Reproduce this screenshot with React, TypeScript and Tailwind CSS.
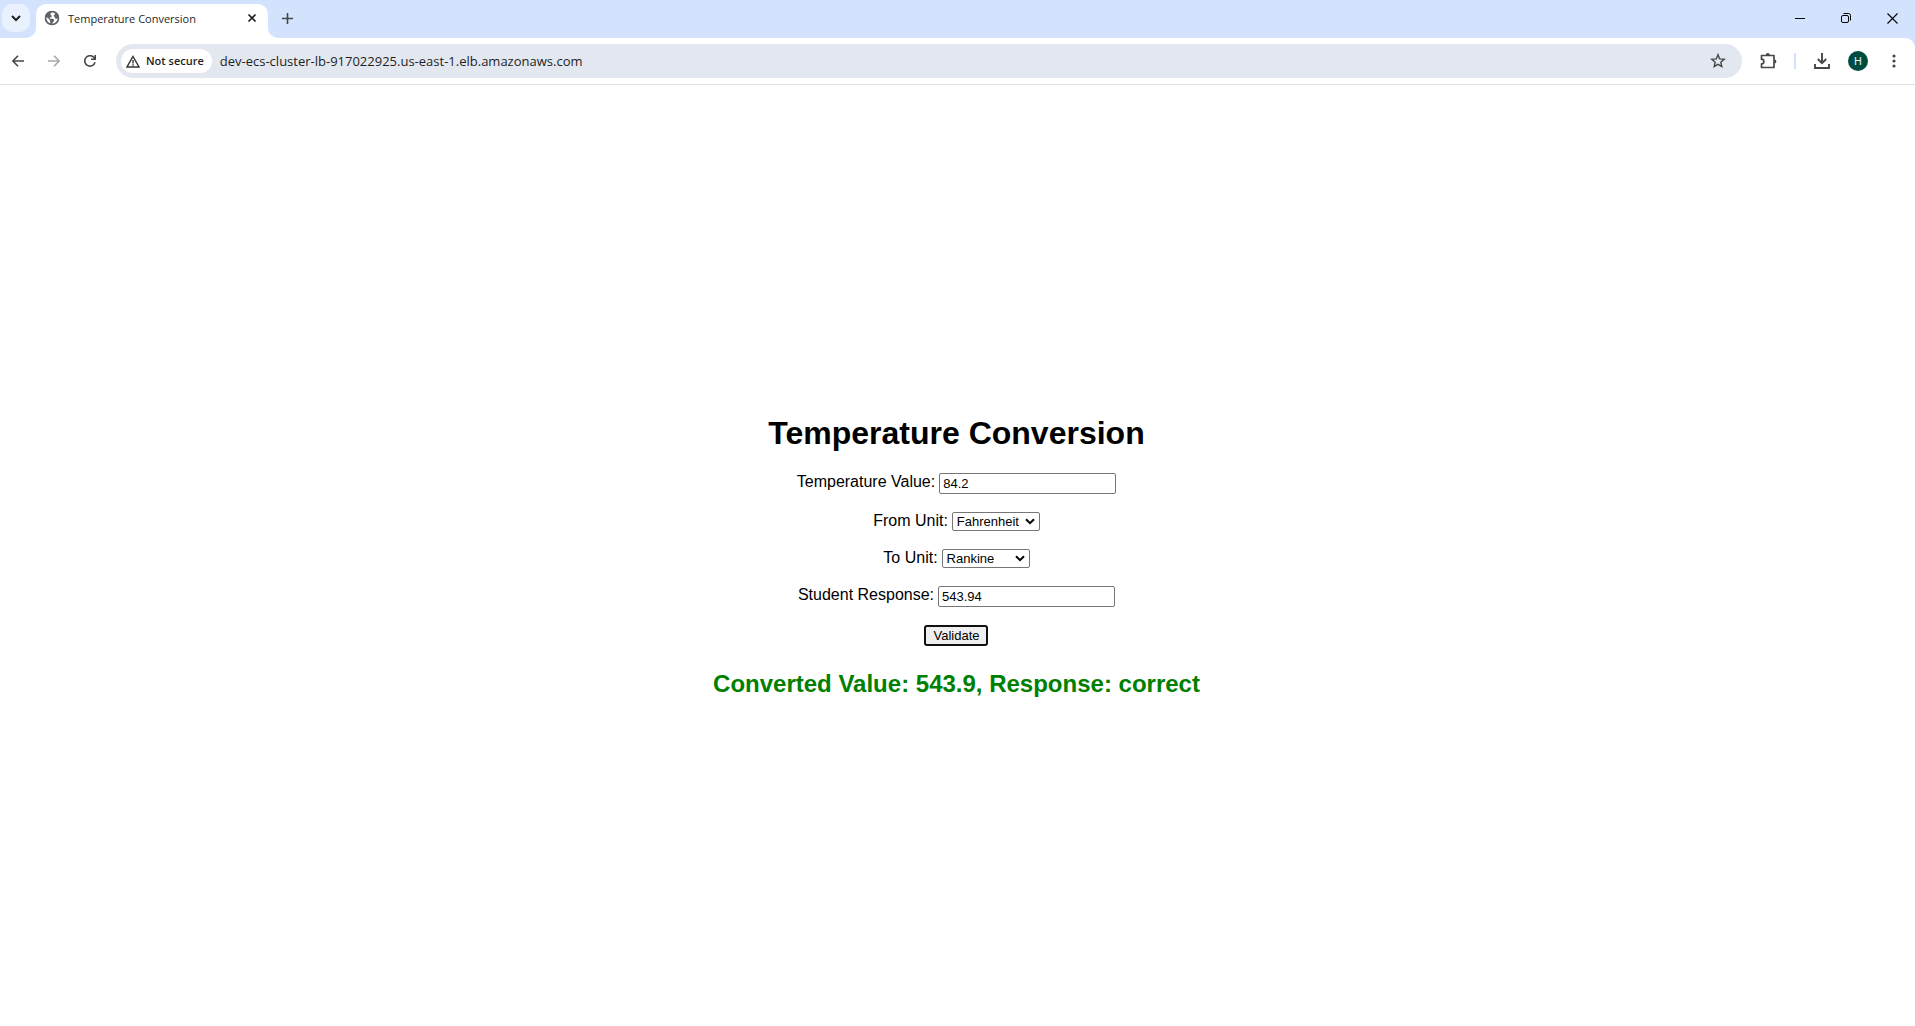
import React, { useState } from "react";

const UNITS = ["Fahrenheit", "Celsius", "Kelvin", "Rankine"];
const FIELD =
  "border border-[#767676] rounded-[2px] bg-white text-[13px] leading-[15px] text-black";

function IconButton({ label, className = "", children }: { label: string; className?: string; children: React.ReactNode }) {
  return (
    <button type="button" aria-label={label} className={`flex h-9 w-9 shrink-0 items-center justify-center ${className}`}>
      {children}
    </button>
  );
}

function TabStrip() {
  return (
    <header className="flex h-[38px] items-start bg-[#d3e3fd] pl-0.5 text-[#1f1f1f]">
      <button type="button" aria-label="Search tabs" className="mt-1 flex h-7 w-7 items-center justify-center rounded-[10px] bg-[#e9f1fe]">
        <svg width="10" height="10" viewBox="0 0 10 10" fill="none" stroke="#1f1f1f" strokeWidth="2">
          <path d="M1 3l4 4 4-4" />
        </svg>
      </button>
      <div className="relative mt-1 ml-1.5 flex h-[34px] w-[232px] items-start rounded-t-[10px] bg-white pt-1.5 pr-2 pl-2">
        <svg className="absolute bottom-0 -left-[10px]" width="10" height="10" fill="#fff">
          <path d="M10 0v10H0A10 10 0 0 0 10 0z" />
        </svg>
        <svg className="absolute -right-[10px] bottom-0" width="10" height="10" fill="#fff">
          <path d="M0 0v10h10A10 10 0 0 1 0 0z" />
        </svg>
        <svg className="shrink-0" width="16" height="16" viewBox="0 0 16 16">
          <circle cx="8" cy="8" r="7" fill="#5f6368" />
          <path d="M9.200 2.100C7.600 2.300 6.500 3.100 6.500 4.200c0 1 1 1.100 1.200 1.800.2.900-.7 1.500-1.700 1.600-.6.100-.5.900.2 1.100.9.300 2.200-.1 3.200.4 1 .5 1 1.700.2 2.500-.8.700-1.200 1.200-1.300 2.500 3.200-.1 5.600-2.700 5.700-5.800-.9.500-2.100.6-2.800-.1-.7-.7-.3-1.300-1-1.700-.8-.5-.6-1.500.3-1.700.8-.2 1.100-1.300-1.300-2.700z" fill="#fff" />
          <path d="M2.100 7.500c1.500 0 2.300.7 2.700 1.500.3.700 1.200.7 1.200 1.600 0 .8.300 1.600.3 3C3.400 12.800 1.900 10.400 2.100 7.500z" fill="#fff" />
          <circle cx="8" cy="8" r="6.500" fill="none" stroke="#5f6368" strokeWidth="1.600" />
        </svg>
        <span className="ml-2 flex-1 font-['Open_Sans','Noto_Sans',sans-serif] text-[11px] leading-[18px] whitespace-nowrap">Temperature Conversion</span>
        <button type="button" aria-label="Close tab" className="flex h-4 w-4 items-center justify-center">
          <svg width="10" height="10" viewBox="0 0 10 10" stroke="#1f1f1f" strokeWidth="1.7">
            <path d="M1.500 1.500l7 7M8.500 1.500l-7 7" />
          </svg>
        </button>
      </div>
      <button type="button" aria-label="New tab" className="mt-1 ml-[5px] flex h-7 w-7 items-center justify-center">
        <svg width="11" height="11" viewBox="0 0 11 11" stroke="#474747" strokeWidth="1.6">
          <path d="M5.500 0v11M0 5.500h11" />
        </svg>
      </button>
      <div className="ml-auto flex">
        <button type="button" aria-label="Minimize" className="flex h-9 w-[46px] items-center justify-center">
          <svg width="10" height="10" stroke="#000"><path d="M0 5.500h10" /></svg>
        </button>
        <button type="button" aria-label="Restore" className="flex h-9 w-[46px] items-center justify-center">
          <svg width="10" height="10" fill="none" stroke="#000">
            <rect x=".5" y="2.500" width="7" height="7" rx="1.500" />
            <path d="M2.500.5H7.500a2 2 0 0 1 2 2v5" />
          </svg>
        </button>
        <button type="button" aria-label="Close" className="flex h-9 w-[46px] items-center justify-center">
          <svg width="11" height="11" stroke="#000" strokeWidth="1.100"><path d="M.5.5l10 10M10.500.5l-10 10" /></svg>
        </button>
      </div>
    </header>
  );
}

function Toolbar() {
  return (
    <div className="bg-[#d3e3fd]">
      <nav aria-label="Browser toolbar" className="flex h-[47px] items-center rounded-tr-[10px] border-b border-[#dfe1e5] bg-white font-['Open_Sans','Noto_Sans',sans-serif] text-[#1f1f1f]">
        <IconButton label="Back">
          <svg width="12" height="12" viewBox="0 0 12 12" fill="none" stroke="#474747" strokeWidth="1.6">
            <path d="M6 .7L.9 6 6 11.300M1 6h11" />
          </svg>
        </IconButton>
        <IconButton label="Forward">
          <svg width="12" height="12" viewBox="0 0 12 12" fill="none" stroke="#a8a8a8" strokeWidth="1.6">
            <path d="M6 .7L11.100 6 6 11.300M11 6H0" />
          </svg>
        </IconButton>
        <IconButton label="Reload">
          <svg width="12" height="12" viewBox="0 0 12 12" fill="none" stroke="#474747" strokeWidth="1.6">
            <path d="M11 7.200A5.200 5.200 0 1 1 9.700 2.300L11.200 4M11.200 0v4.200H7" />
          </svg>
        </IconButton>
        <div className="ml-2 flex h-[34px] flex-1 items-center rounded-full bg-[#e3e8f0] pl-[5px]">
          <button type="button" className="flex h-6 items-center gap-1.5 rounded-full bg-white pr-2 pl-[5px] text-[11px] font-semibold whitespace-nowrap">
            <svg width="14" height="13" viewBox="0 0 14 13" fill="none" stroke="#333" strokeWidth="1.400">
              <path d="M7 1.500L13 12H1zM7 5v3.500M7 9.300v1.400" />
            </svg>
            Not secure
          </button>
          <input
            aria-label="Address"
            defaultValue="dev-ecs-cluster-lb-917022925.us-east-1.elb.amazonaws.com"
            className="ml-2 h-6 min-w-0 flex-1 bg-transparent text-[13px] outline-none"
          />
          <button type="button" aria-label="Bookmark this tab" className="flex h-8 w-12 items-center justify-center">
            <svg width="16" height="16" viewBox="0 0 16 16" fill="none" stroke="#474747" strokeWidth="1.400">
              <path d="M8 1.700l1.700 4.200 4.500.4-3.400 2.900 1 4.400L8 11.300l-3.800 2.300 1-4.400-3.400-2.900 4.500-.4z" />
            </svg>
          </button>
        </div>
        <IconButton label="Extensions" className="ml-2">
          <svg width="18" height="18" viewBox="0 0 18 18" fill="none" stroke="#474747" strokeWidth="1.700">
            <path d="M2.500 3.500h12.500v12h-12.500v-3.600a2.200 2.200 0 0 0 0-4.700z" strokeLinejoin="round" />
            <path d="M6.800 3.100a2 2 0 0 1 4 0zM15.400 7.500a2 2 0 0 1 0 4z" fill="#474747" stroke="none" />
          </svg>
        </IconButton>
        <span className="mx-2 h-4 w-0.5 bg-[#d3e3fd]" />
        <IconButton label="Downloads">
          <svg width="16" height="16" viewBox="0 0 16 16" fill="none" stroke="#474747" strokeWidth="1.900">
            <path d="M8 0v10M3.800 6L8 10.200 12.200 6M1 11v4h14v-4" />
          </svg>
        </IconButton>
        <IconButton label="Profile">
          <span className="flex h-5 w-5 items-center justify-center rounded-full bg-[#004d40] font-['Roboto',sans-serif] text-[11px] leading-none text-[#e0efed]">H</span>
        </IconButton>
        <IconButton label="Menu" className="mr-[3px]">
          <svg width="4" height="14" fill="#474747">
            <circle cx="2" cy="2" r="1.600" /><circle cx="2" cy="7" r="1.600" /><circle cx="2" cy="12" r="1.600" />
          </svg>
        </IconButton>
      </nav>
    </div>
  );
}

function TextRow({ id, label, initial }: { id: string; label: string; initial: string }) {
  return (
    <div className="flex h-[21px] items-start gap-1">
      <label htmlFor={id}>{label}</label>
      <input id={id} name={id} defaultValue={initial} className={`${FIELD} h-[21px] w-[177px] px-[3px]`} />
    </div>
  );
}

function UnitRow({ id, label, initial }: { id: string; label: string; initial: string }) {
  const [unit, setUnit] = useState(initial);
  return (
    <div className="flex h-[19px] items-start gap-1">
      <label htmlFor={id}>{label}</label>
      <div className="relative flex">
        <select id={id} name={id} value={unit} onChange={(e) => setUnit(e.target.value)} className={`${FIELD} h-[19px] w-[88px] appearance-none pl-1`}>
          {UNITS.map((u) => (
            <option key={u}>{u}</option>
          ))}
        </select>
        <svg className="pointer-events-none absolute top-1.5 right-[5px]" width="10" height="7" viewBox="0 0 10 7" fill="none" stroke="#000" strokeWidth="2">
          <path d="M1 1.200l4 4 4-4" />
        </svg>
      </div>
    </div>
  );
}

export default function App() {
  return (
    <div className="flex min-h-screen flex-col bg-white">
      <TabStrip />
      <Toolbar />
      <main className="flex flex-1 flex-col items-center justify-center pt-0.5 pr-0.5 font-['Liberation_Sans',Arial,sans-serif] text-base leading-[18px] text-black">
        <h1 className="mb-[21px] text-[32px] leading-[37px] font-bold">Temperature Conversion</h1>
        <form className="flex flex-col items-center gap-[18px]" onSubmit={(e) => e.preventDefault()}>
          <TextRow id="temperature" label="Temperature Value:" initial="84.2" />
          <UnitRow id="from-unit" label="From Unit:" initial="Fahrenheit" />
          <UnitRow id="to-unit" label="To Unit:" initial="Rankine" />
          <TextRow id="response" label="Student Response:" initial="543.94" />
          <button type="submit" className="h-[21px] w-16 rounded-[3px] border-2 border-[#101010] bg-[#efefef] text-[13px] leading-[15px]">Validate</button>
        </form>
        <h2 className="mt-6 text-2xl leading-[28px] font-bold text-[#008000]">Converted Value: 543.9, Response: correct</h2>
      </main>
    </div>
  );
}
